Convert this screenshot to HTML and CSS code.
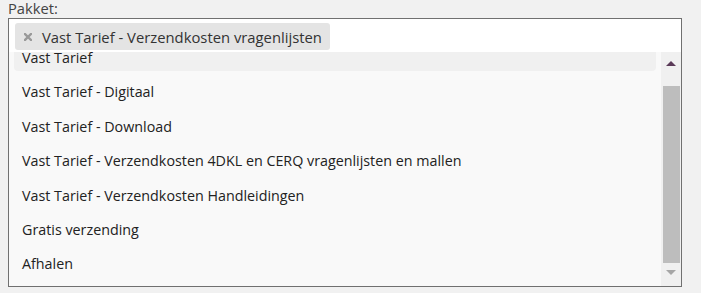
FILE: index.html
```html
<!DOCTYPE html>
<html lang="nl">
<head>
    <meta charset="UTF-8">
    <meta name="viewport" content="width=device-width, initial-scale=1.0">
    <title>Pakket</title>
    <link rel="stylesheet" href="styles.css">
</head>
<body>
    <label class="field-label" for="pakket">Pakket:</label>
    <div class="select-box" id="pakket">
        <div class="selection">
            <span class="tag">
                <svg class="tag-remove" width="8" height="8" viewBox="0 0 8 8">
                    <path d="M1 1 L7 7 M7 1 L1 7" stroke="#999" stroke-width="2.4" stroke-linecap="square"/>
                </svg>
                Vast Tarief - Verzendkosten vragenlijsten
            </span>
        </div>
        <div class="dropdown">
            <ul class="options">
                <li class="option active">Vast Tarief</li>
                <li class="option">Vast Tarief - Digitaal</li>
                <li class="option">Vast Tarief - Download</li>
                <li class="option">Vast Tarief - Verzendkosten 4DKL en CERQ vragenlijsten en mallen</li>
                <li class="option">Vast Tarief - Verzendkosten Handleidingen</li>
                <li class="option">Gratis verzending</li>
                <li class="option">Afhalen</li>
            </ul>
            <div class="scrollbar">
                <div class="arrow up"></div>
                <div class="thumb"></div>
                <div class="arrow down"></div>
            </div>
        </div>
    </div>
    <p class="note">Kies het pakket dat bij de bestelling hoort, de verzendkosten worden automatisch berekend.</p>
</body>
</html>
```

FILE: styles.css
```css
body {
    margin: 0;
    background: #f1f1f1;
    font-family: "Open Sans", "Noto Sans", sans-serif;
    font-size: 14.3px;
    color: #222;
    overflow: hidden;
}

.field-label {
    display: block;
    margin: 0 0 0 8px;
    height: 18px;
    line-height: 17px;
    font-size: 14.7px;
    color: #444;
}

.select-box {
    margin-left: 8px;
    width: 674px;
    height: 269px;
    box-sizing: border-box;
    border: 1px solid #707070;
    background: #fff;
    display: flex;
    flex-direction: column;
}

.selection {
    height: 33px;
    padding: 4px 0 0 6px;
    box-sizing: border-box;
}

.tag {
    display: inline-flex;
    align-items: center;
    gap: 10px;
    width: 315px;
    height: 27px;
    box-sizing: border-box;
    padding-left: 9px;
    background: #e4e4e4;
    border-radius: 3px;
    font-size: 14.8px;
    color: #333;
}

.dropdown {
    flex: 1;
    display: flex;
    min-height: 0;
}

.options {
    flex: 1;
    list-style: none;
    margin: 0;
    padding: 0 5px;
    background: #f9f9f9;
    overflow: hidden;
}

.option {
    padding: 8px 8px 4px;
    line-height: 18px;
    margin-bottom: 4.4px;
    white-space: nowrap;
}

.option:first-child {
    margin-top: -11px;
}

.option.active {
    background: #f0f0f0;
    border-radius: 0 0 4px 4px;
}

.scrollbar {
    width: 20px;
    background: #f0f0f0;
    display: flex;
    flex-direction: column;
    align-items: center;
}

.arrow {
    width: 0;
    height: 0;
    border-left: 5px solid transparent;
    border-right: 5px solid transparent;
}

.arrow.up {
    margin-top: 9px;
    border-bottom: 5px solid #5a3a58;
}

.arrow.down {
    margin-top: 7px;
    border-top: 5px solid #a6a6a6;
}

.thumb {
    margin-top: 20px;
    margin-left: 1px;
    width: 17px;
    height: 177px;
    background: #bdbdbd;
}

.note {
    margin: 2px 0 0 22px;
    white-space: nowrap;
    color: #333;
}
```
